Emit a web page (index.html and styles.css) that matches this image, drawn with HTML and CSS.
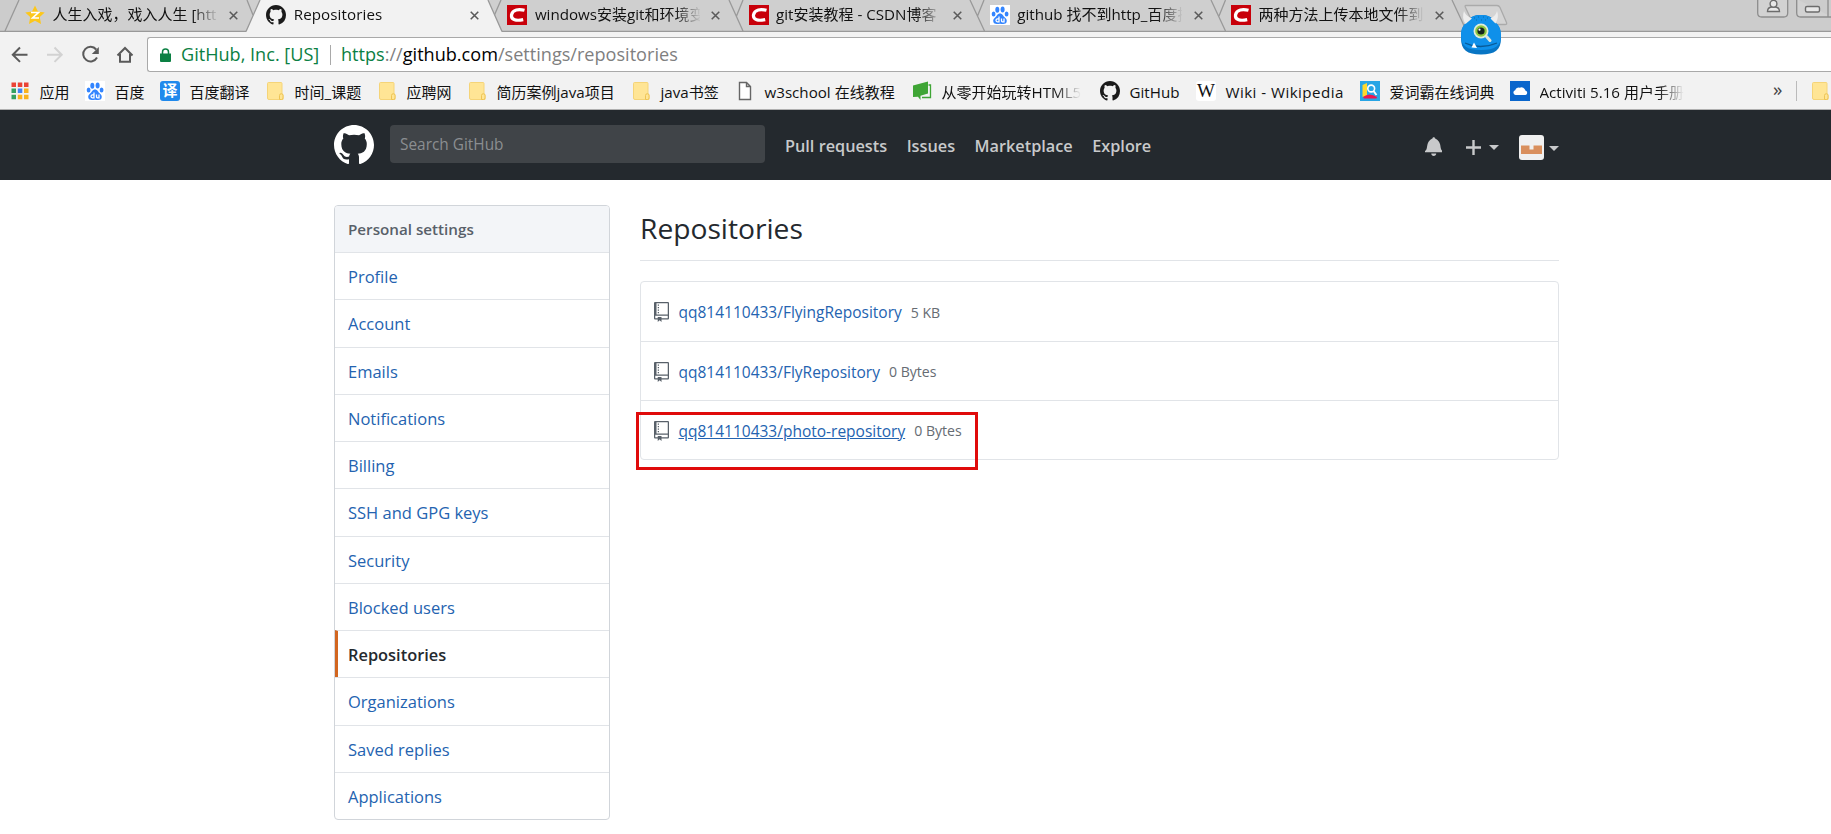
FILE: index.html
```html
<!DOCTYPE html>
<html lang="zh-CN">
<head>
<meta charset="utf-8">
<title>Repositories</title>
<link rel="stylesheet" href="styles.css">
</head>
<body>
<svg class="defs" width="0" height="0" aria-hidden="true">
  <symbol id="mark" viewBox="0 0 16 16"><path d="M8 0C3.58 0 0 3.58 0 8c0 3.54 2.29 6.53 5.47 7.59.4.07.55-.17.55-.38 0-.19-.01-.82-.01-1.49-2.01.37-2.53-.49-2.69-.94-.09-.23-.48-.94-.82-1.13-.28-.15-.68-.52-.01-.53.63-.01 1.08.58 1.23.82.72 1.21 1.87.87 2.33.66.07-.52.28-.87.51-1.07-1.78-.2-3.64-.89-3.64-3.95 0-.87.31-1.59.82-2.15-.08-.2-.36-1.02.08-2.12 0 0 .67-.21 2.2.82.64-.18 1.32-.27 2-.27.68 0 1.36.09 2 .27 1.53-1.04 2.2-.82 2.2-.82.44 1.1.16 1.92.08 2.12.51.56.82 1.27.82 2.15 0 3.07-1.87 3.75-3.65 3.95.29.25.54.73.54 1.48 0 1.07-.01 1.93-.01 2.2 0 .21.15.46.55.38A8.013 8.013 0 0 0 16 8c0-4.42-3.58-8-8-8z"/></symbol>
  <symbol id="repo" viewBox="0 0 12 16"><path d="M4 9H3V8h1v1zm0-3H3v1h1V6zm0-2H3v1h1V4zm0-2H3v1h1V2zm8-1v12c0 .55-.45 1-1 1H6v2l-1.5-1.5L3 16v-2H1c-.55 0-1-.45-1-1V1c0-.55.45-1 1-1h10c.55 0 1 .45 1 1zm-1 10H1v2h2v-1h3v1h5v-2zm0-10H2v9h9V1z"/></symbol>
  <symbol id="close" viewBox="0 0 10 10"><path d="M.8.8l8.4 8.4M9.2.8L.8 9.2" fill="none" stroke="#5a5a5a" stroke-width="1.7"/></symbol>
  <symbol id="folder" viewBox="0 0 20 20"><path d="M3.500 1.500h12.500a1 1 0 0 1 1 1v10.500l1 .5v5h-14a1.500 1.500 0 0 1-1.500-1.500v-14.500a1 1 0 0 1 1-1z" fill="#ffe595" stroke="#f5d478"/><path d="M14.500 18.500v-4a1.700 1.700 0 0 1 3.500 0v2.500a1.500 1.500 0 0 1-1.500 1.500z" fill="#ffe595" stroke="#eec454"/></symbol>
  <symbol id="baidu" viewBox="0 0 20 20"><rect width="20" height="20" fill="#fff"/><g fill="#3385ff"><ellipse cx="7.300" cy="4.700" rx="2" ry="3"/><ellipse cx="12.600" cy="4.600" rx="2" ry="3"/><ellipse cx="3.600" cy="9" rx="1.900" ry="2.600"/><ellipse cx="16.600" cy="9" rx="1.900" ry="2.600"/><path d="M10 8.500c2.500 0 3.200 2.500 4.600 3.800 1.500 1.300 2.700 2.700 2 4.800-.8 2.400-3.300 2-6.600 1.700-3.300.3-5.800.7-6.600-1.700-.7-2.100.5-3.500 2-4.800C6.800 11 7.500 8.500 10 8.500z"/></g><path d="M9 11.500v5.300H7.500a1.400 1.400 0 0 1 0-3H9M11.500 13.500v2.300q0 1 1 1h1.500v-3.300" fill="none" stroke="#fff" stroke-width="1.300"/></symbol>
  <symbol id="csdn" viewBox="0 0 20 20"><rect width="20" height="20" fill="#c8000a"/><path d="M17.500 5.300C12 3.800 5.500 4.300 4.500 9.900c-.7 5.200 5 6.200 11.700 4.700" fill="none" stroke="#fff" stroke-width="3.200"/></symbol>
</svg>

<div class="browser">
  <div class="tabstrip">
    <svg class="tab-shapes" viewBox="0 0 1831 32" width="1831" height="32">
      <path d="M5 31L19 0H1452L1466 31z" fill="#cfcfcf"/>
      <g fill="none" stroke="#999" stroke-width="1.300">
        <path d="M0 31.500H1831M5 31L19 0M247 0l6 15M501 0l-7 16M729 0l14 31M743 0l-6.500 16M970 0l14.500 31M984 0l-6.500 16M1211 0l14.500 31M1225.500 0l-6.500 16M1452 0l14.500 31"/>
        <path d="M1466 5.500h31q2 0 3 2l6.500 15q.8 2-1.500 2h-29q-2.500 0-3.500-2l-7-15q-1-2 .5-2z" fill="#d4d4d4" stroke="#aaa"/>
      </g>
      <path d="M246 32L260 0H488L502 32z" fill="#f2f2f2"/>
      <path d="M246 31.500L260 0M488 0L502 31.500" fill="none" stroke="#999" stroke-width="1.300"/>
    </svg>
    <div class="tab"><svg class="fav" viewBox="0 0 20 20"><path d="M10 .5l3 6 6.700.9-4.900 4.700 1.200 7-6-3.300-6 3.300 1.200-7L.3 7.400 7 6.500z" fill="#fcc71c"/><path d="M6 7.500h7.500L7.500 13H14" fill="none" stroke="#fff" stroke-width="1.600"/></svg><span class="title">人生入戏，戏入人生 <i>[htt</i></span><svg class="x"><use href="#close"/></svg></div>
    <div class="tab"><svg class="fav dark"><use href="#mark"/></svg><span class="title roomy"><i>Repositories</i></span><svg class="x"><use href="#close"/></svg></div>
    <div class="tab"><svg class="fav"><use href="#csdn"/></svg><span class="title"><i>windows</i>安装<i>git</i>和环境变</span><svg class="x"><use href="#close"/></svg></div>
    <div class="tab"><svg class="fav"><use href="#csdn"/></svg><span class="title"><i>git</i>安装教程<i> - CSDN</i>博客</span><svg class="x"><use href="#close"/></svg></div>
    <div class="tab"><svg class="fav"><use href="#baidu"/></svg><span class="title"><i>github </i>找不到<i>http_</i>百度搜</span><svg class="x"><use href="#close"/></svg></div>
    <div class="tab"><svg class="fav"><use href="#csdn"/></svg><span class="title">两种方法上传本地文件到</span><svg class="x"><use href="#close"/></svg></div>
    <svg class="window-buttons" viewBox="0 0 74 18" width="74" height="18"><g fill="#d2d2d2" stroke="#8d8d8d" stroke-width="1.300"><path d="M.7-1v14q0 4 4 4h22q4 0 4-4V-1"/><path d="M39.700-1v14q0 4 4 4H75M71-1v18"/></g><g fill="#e8e8e8" stroke="#6c6c6c" stroke-width="1.400"><rect x="48.500" y="6.500" width="14" height="5.500" rx="1.500"/><path d="M10.500 11.500q0-4 4-4.500h4q4 .5 4 4.500z"/><circle cx="16.500" cy="3.800" r="3.400"/></g></svg>
  </div>

  <div class="toolbar">
    <svg class="navicons" viewBox="0 0 147 40" width="147" height="40"><g fill="none" stroke="#5a5a5a" stroke-width="2"><path d="M27.500 22.700H13M20 15.500l-7.200 7.200 7.200 7.200"/><path d="M47 22.700h14.500M54.500 15.500l7.200 7.200-7.200 7.200" stroke="#d2d2d2"/><path d="M96.200 17.500a7.300 7.300 0 1 0 .8 8"/><path d="M117.500 23.500l7.500-7.500 7.500 7.500M120 22v7.700h10V22"/></g><path d="M98.800 15v7h-7z" fill="#5a5a5a"/></svg>
    <div class="omnibox">
      <svg class="lock" viewBox="0 0 11 14" width="11" height="14"><path d="M0 5.500h11V13q0 1-1 1H1q-1 0-1-1z" fill="#0b8043"/><path d="M2.500 6V4a3 3 0 0 1 6 0v2" fill="none" stroke="#0b8043" stroke-width="1.500"/></svg>
      <span class="ev">GitHub, Inc. [US]</span>
      <span class="bar"></span>
      <span class="url"><span class="green">https</span><span class="grey">://</span>github.com<span class="grey">/settings/repositories</span></span>
    </div>
  </div>

  <div class="bookmarks">
    <div class="bm"><svg viewBox="0 0 20 20"><path d="M1.500 1.500h4.500v4.500H1.500zM7.800 1.500h4.500v4.500H7.800zM14 1.500h4.500v4.500H14z" fill="#ea4335"/><path d="M1.500 7.500h4.500V12H1.500zM1.500 13.700h4.500v4.500H1.500z" fill="#34a162"/><path d="M7.800 7.500h4.500V12H7.800z" fill="#4285f4"/><path d="M14 7.500h4.500V12H14zM7.800 13.700h4.500v4.500H7.800zM14 13.700h4.500v4.500H14z" fill="#f9b31f"/></svg><span>应用</span></div>
    <div class="bm"><svg><use href="#baidu"/></svg><span>百度</span></div>
    <div class="bm"><b class="yi">译</b><span>百度翻译</span></div>
    <div class="bm"><svg><use href="#folder"/></svg><span>时间<i>_</i>课题</span></div>
    <div class="bm"><svg><use href="#folder"/></svg><span>应聘网</span></div>
    <div class="bm"><svg><use href="#folder"/></svg><span>简历案例<i>java</i>项目</span></div>
    <div class="bm"><svg><use href="#folder"/></svg><span><i>java</i>书签</span></div>
    <div class="bm"><svg viewBox="0 0 20 20"><path d="M4.500 1.500h7l4 4v13h-11zM11.500 1.500v4h4" fill="#fff" stroke="#666" stroke-width="1.400"/></svg><span><i>w3school </i>在线教程</span></div>
    <div class="bm"><svg viewBox="0 0 20 20"><path d="M16.500 4h2v12.500H10" fill="none" stroke="#3fa535" stroke-width="1.300"/><path d="M1 4.500L16 .5v12l-7.500 2.300V19L6 15.700l-5 .3z" fill="#3fa535"/></svg><span class="fade">从零开始玩转<i>HTML5</i></span></div>
    <div class="bm"><svg class="dark"><use href="#mark"/></svg><span><i>GitHub</i></span></div>
    <div class="bm"><b class="wiki">W</b><span class="wide"><i>Wiki - Wikipedia</i></span></div>
    <div class="bm"><svg viewBox="0 0 20 20"><rect width="20" height="20" fill="#28a5e5"/><path d="M2.500 4L7 2v13l-4.500 1z" fill="#ffd92d"/><circle cx="11.200" cy="7.500" r="3.400" fill="#28a5e5" stroke="#fff" stroke-width="1.600"/><path d="M13.500 10l3 4" stroke="#fff" stroke-width="1.800"/><path d="M3 16q6-5 14 0l-.5 1.500H4z" fill="#ed1651"/></svg><span>爱词霸在线词典</span></div>
    <div class="bm"><svg viewBox="0 0 20 20"><rect width="20" height="20" fill="#0a66cc"/><path d="M5.500 14a2.400 2.400 0 0 1-.3-4.700 3.500 3.500 0 0 1 4.500-2.600 3.800 3.800 0 0 1 5.600 2.800 2.300 2.300 0 0 1 .2 4.500z" fill="#fff"/></svg><span class="fade"><i>Activiti 5.16 </i>用户手册</span></div>
    <div class="more">»</div>
    <div class="other"><svg><use href="#folder"/></svg></div>
  </div>

  <svg class="monster" viewBox="0 0 42 46" width="42" height="46"><path d="M21 5C15 5 10 6.500 7.500 12 3 15 1 19 1 28c0 12 6 16.500 20 16.500S41 40 41 28c0-9-2-13-6.500-16C32 6.500 27 5 21 5z" fill="#0875c4"/><path d="M21 5C15 5 10 6.500 7.500 12 3 15 1 18 1 26c0 10 6 14 20 14s20-4 20-14c0-8-2-11-6.500-14C32 6.500 27 5 21 5z" fill="#0f90ea"/><path d="M4 1q1.500 5 8 7.500L5.500 14Q1.500 8 4 1zM37 1q-1 5-6.500 7.500l5 5Q39.500 7 37 1z" fill="#ededed"/><path d="M14 8h1M18 7h1M23 7h1M27 8h1M16 10h1M21 10h1M25 10h1" stroke="#0d6bad"/><path d="M5 33q15 7 32 0" fill="none" stroke="#095b98" stroke-width="1.300"/><path d="M11.500 37.500l2.500-5 3 5.500z" fill="#fff"/><path d="M26.500 26.500l3.500 4" stroke="#dfe7dc" stroke-width="3" stroke-linecap="round"/><circle cx="21" cy="21" r="7.500" fill="#e0ecda"/><circle cx="21" cy="21" r="5.800" fill="#8cc63f"/><circle cx="21" cy="21" r="3.600" fill="#15251b"/><circle cx="19.500" cy="19.700" r="1.100" fill="#fff"/></svg>
</div>

<header class="gh-header">
  <svg class="logo"><use href="#mark"/></svg>
  <div class="search">Search GitHub</div>
  <nav class="gh-nav"><a>Pull requests</a><a>Issues</a><a>Marketplace</a><a>Explore</a></nav>
  <div class="gh-user">
    <svg class="bell" viewBox="0 0 14 16" width="17.500" height="20"><path d="M14 12v1H0v-1l.73-.58c.77-.77.81-2.550 1.190-4.420C2.690 3.230 6 2 6 2c0-.55.45-1 1-1s1 .45 1 1c0 0 3.390 1.230 4.160 5 .38 1.880.42 3.660 1.190 4.420l.66.58H14zm-7 4c1.110 0 2-.89 2-2H5c0 1.110.89 2 2 2z"/></svg>
    <svg class="plus" viewBox="0 0 15 15" width="15" height="15"><path d="M6.300 0h2.400v6.300H15v2.400H8.700V15H6.300V8.700H0V6.300h6.300z"/></svg>
    <span class="caret"></span>
    <svg class="avatar" viewBox="0 0 25 25" width="25" height="25"><rect width="25" height="25" rx="3" fill="#f0f0f0"/><path d="M2 10.500h8.500V14.500h4V10.500H23v8.500H2z" fill="#d98f5d"/></svg>
    <span class="caret low"></span>
  </div>
</header>

<main class="page">
  <nav class="side">
    <div class="side-head">Personal settings</div>
    <a>Profile</a><a>Account</a><a>Emails</a><a>Notifications</a><a>Billing</a><a>SSH and GPG keys</a><a>Security</a><a>Blocked users</a><a class="selected">Repositories</a><a>Organizations</a><a>Saved replies</a><a>Applications</a>
  </nav>
  <section class="content">
    <h2>Repositories</h2>
    <div class="repos">
      <div class="repo"><svg><use href="#repo"/></svg><a>qq814110433/FlyingRepository</a><small>5 KB</small></div>
      <div class="repo"><svg><use href="#repo"/></svg><a>qq814110433/FlyRepository</a><small>0 Bytes</small></div>
      <div class="repo"><svg><use href="#repo"/></svg><a class="hover">qq814110433/photo-repository</a><small>0 Bytes</small></div>
      <div class="highlight"></div>
    </div>
  </section>
</main>
</body>
</html>
```
FILE: styles.css
```css
* { box-sizing: border-box; }
body {
  margin: 0;
  width: 1831px;
  height: 834px;
  overflow: hidden;
  background: #fff;
  font-family: "Open Sans", "Noto Sans CJK SC", sans-serif;
  color: #24292e;
}
.defs { position: absolute; }
svg { flex: none; display: block; }
i { font-style: normal; font-size: 1.01em; white-space: pre; }

/* browser chrome */
.browser { position: relative; height: 110px; background: #f2f2f2; border-bottom: 1px solid #b0b0b0; }
.tabstrip { position: relative; display: flex; height: 32px; padding-left: 5px; background: #ccc; }
.tab-shapes { position: absolute; left: 0; top: 0; }
.tab { position: relative; display: flex; align-items: center; width: 241.2px; height: 30px; padding-left: 20px; font-size: 15px; color: #111; }
.fav { width: 20px; height: 20px; }
.dark { fill: #1b1b1b; }
.title {
  width: 165px;
  margin: -2px 11.500px 0 7.500px;
  overflow: hidden;
  white-space: nowrap;
  line-height: 28px;
  -webkit-mask-image: linear-gradient(90deg, #000 140px, transparent 166px);
  mask-image: linear-gradient(90deg, #000 140px, transparent 166px);
}
.roomy { letter-spacing: .1px; }
.x { width: 9px; height: 9px; }
.window-buttons { position: absolute; right: 0; top: 0; }

.toolbar { display: flex; height: 40px; }
.omnibox {
  flex: 1;
  display: flex;
  align-items: center;
  height: 35px;
  margin-top: 5px;
  padding-left: 12px;
  background: #fff;
  border: 1px solid #a9a9a9;
  border-right: 0;
  border-radius: 3px 0 0 3px;
  font-size: 18.1px;
  white-space: nowrap;
}
.ev, .url { padding-bottom: 2px; }
.ev { margin-left: 10px; width: 138px; color: #0b8043; }
.bar { width: 1px; height: 20px; margin: 0 10px 0 11px; background: #a9a9a9; }
.url { color: #000; }
.green { color: #0b8043; }
.grey { color: #7f7f7f; }

.bookmarks {
  display: grid;
  grid-template-columns: 75px 75px 105px 112px 90px 164px 104px 177px 188px 96px 164px 150px 263px 23px 36px;
  height: 37px;
  padding-left: 10px;
  align-items: center;
  font-size: 15px;
  color: #111;
  white-space: nowrap;
}
.bm { display: flex; align-items: center; gap: 9.500px; height: 20px; }
.bm svg, .bm b { width: 20px; height: 20px; flex: none; }
.bm span { line-height: 20px; padding-top: 2px; }
.wide { letter-spacing: .45px; }
.fade {
  -webkit-mask-image: linear-gradient(90deg, #000 calc(100% - 26px), transparent);
  mask-image: linear-gradient(90deg, #000 calc(100% - 26px), transparent);
}
.yi { border-radius: 3px; background: #2089ec; color: #fff; font-size: 15px; line-height: 19px; text-align: center; }
.wiki { border-radius: 3px; background: #fff; color: #111; font: 19px/20px "Liberation Serif", serif; text-align: center; }
.more { color: #444; font-size: 19px; line-height: 20px; margin-top: -4px; }
.other { border-left: 1px solid #bbb; padding-left: 13px; }
.other svg { width: 20px; height: 20px; }
.monster { position: absolute; left: 1460px; top: 10px; }

/* site header */
.gh-header { display: flex; height: 70px; padding: 0 272px 0 334px; background: #24292e; }
.logo { width: 40px; height: 40px; margin-top: 15px; fill: #fff; }
.search { width: 375px; height: 38px; margin: 15px 0 0 16px; padding-left: 10px; border-radius: 4px; background: #404448; color: #8b8e91; font-size: 15.400px; line-height: 39px; }
.gh-nav { display: flex; gap: 19.500px; margin-left: 20px; font-size: 16.270px; font-weight: 600; line-height: 72px; color: #c8c9cb; white-space: nowrap; }
.gh-user { display: flex; align-items: center; margin-left: auto; height: 74px; fill: #c8c9cb; }
.bell { margin-top: -2px; }
.plus { margin-left: 24px; }
.caret { margin-left: 8px; border: 5px solid transparent; border-top-color: #c8c9cb; border-bottom: 0; }
.avatar { margin-left: 20px; }
.caret.low { margin-left: 5px; margin-top: 2px; }

/* settings page */
.page { display: flex; gap: 30px; padding: 25px 272px 0 334px; }
.side { width: 276px; height: 615px; border: 1px solid #d1d5da; border-radius: 4px; overflow: hidden; font-size: 16.500px; }
.side-head { height: 46px; padding-left: 13px; background: #f3f5f8; color: #586069; font-size: 15.200px; font-weight: 600; line-height: 46px; }
.side a { display: block; height: 47.250px; padding-left: 13px; border-top: 1px solid #e1e4e8; color: #2463b0; line-height: 48px; }
.side .selected { padding-left: 10px; border-left: 3px solid #d26620; color: #24292e; font-weight: 600; font-size: 16.400px; }
.content { flex: 1; }
h2 { height: 56px; margin: 0 0 20px; border-bottom: 1px solid #e1e4e8; font-size: 28.200px; font-weight: 400; line-height: 46px; }
.repos { position: relative; height: 179px; border: 1px solid #e1e4e8; border-radius: 4px; }
.repo { display: flex; align-items: center; height: 59px; padding: 1px 0 0 13px; font-size: 15.500px; }
.repo + .repo { border-top: 1px solid #e1e4e8; }
.repo svg { width: 15px; height: 20px; fill: #586069; }
.repo a { margin: 0 9px 0 9.500px; color: #2463b0; }
.repo .hover { text-decoration: underline; }
.repo small { font-size: 14.100px; color: #666c73; }
.highlight { position: absolute; left: -5px; top: 130px; width: 342px; height: 58px; border: 3px solid #e00b0b; }
```
